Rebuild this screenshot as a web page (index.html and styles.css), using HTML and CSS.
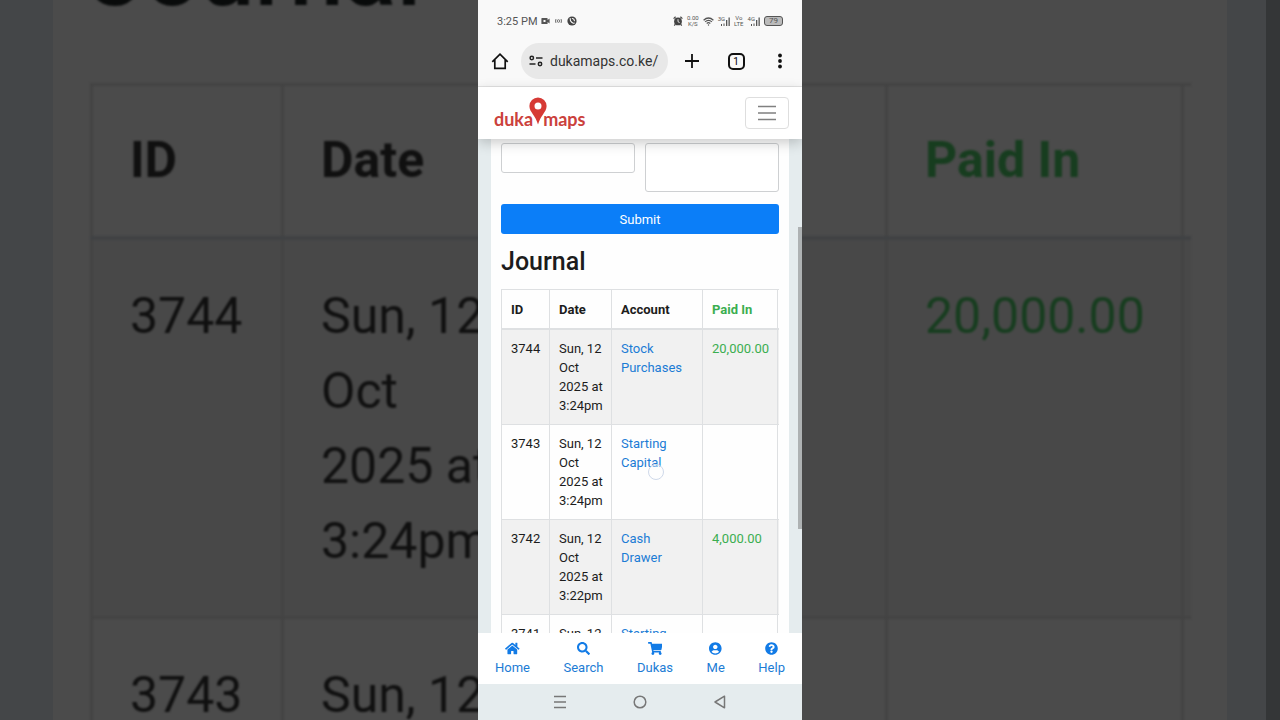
FILE: index.html
```html
<!DOCTYPE html>
<html lang="en">
<head>
  <meta charset="UTF-8">
  <meta name="viewport" content="width=device-width, initial-scale=1">
  <title>Duka Maps</title>
  <link rel="stylesheet" href="styles.css">
</head>
<body>
  <!-- enlarged, dimmed page behind the phone -->
  <div class="backdrop" aria-hidden="true">
    <div class="backdrop-card">
      <div class="backdrop-title">Journal</div>
      <table class="backdrop-table">
        <thead>
          <tr><th class="col-id">ID</th><th class="col-date">Date</th><th class="col-account"></th><th class="col-paid paid">Paid In</th><th class="col-rest"></th></tr>
        </thead>
        <tbody>
          <tr><td>3744</td><td>Sun, 12 Oct<br>2025 at 3:24pm</td><td></td><td class="paid">20,000.00</td><td></td></tr>
          <tr><td>3743</td><td>Sun, 12</td><td></td><td></td><td></td></tr>
        </tbody>
      </table>
    </div>
    <div class="backdrop-scroll"></div>
  </div>

  <div class="phone">
    <div class="status-bar">
      <span class="clock">3:25 PM</span>
      <svg width="9" height="8" viewBox="0 0 9 8"><path fill="#555" fill-rule="evenodd" d="M1 1h5q.6 0 .6.6V3L8.600 1.600v4.800L6.600 5v1.400q0 .6-.6.6H1q-.6 0-.6-.6V1.600Q.4 1 1 1zm1.500 2v2h2V3z"/></svg>
      <svg width="9" height="8" viewBox="0 0 9 8" fill="none" stroke="#555" stroke-width=".8"><circle cx="4.500" cy="4" r="1.300"/><path d="M2 2Q.9 4 2 6M7 2Q8.100 4 7 6"/></svg>
      <svg width="10" height="10" viewBox="0 0 10 10"><circle cx="5" cy="5" r="4.600" fill="#444"/><path d="M3.200 2.600Q3 5 4.700 6.300T7.200 7.100M5.300 2.500Q7.300 2.700 7.400 4.700" fill="none" stroke="#fff" stroke-width="1.100" stroke-linecap="round"/></svg>
      <span class="status-space"></span>
      <svg width="10" height="10" viewBox="0 0 10 10"><circle cx="5" cy="5.400" r="3.900" fill="#444"/><path d="M.6 2.600L2.600.8M9.400 2.600L7.400.8M2.200 8.400l-.9 1.200M7.800 8.400l.9 1.200" stroke="#444" stroke-width="1.200"/><path d="M5 3.200v2.500l1.600.9" fill="none" stroke="#f8f8f8" stroke-width=".9"/></svg>
      <span class="tiny">0.00<br>K/S</span>
      <svg width="11" height="9" viewBox="0 0 11 9" fill="none" stroke="#555" stroke-width="1.200"><path d="M.6 3.200Q5.500-1.200 10.400 3.200M2.100 4.900Q5.500 1.900 8.900 4.900M3.700 6.500Q5.500 4.900 7.300 6.500"/><circle cx="5.500" cy="8" r=".7" fill="#555" stroke="none"/></svg>
      <span class="signal"><span>3G</span><svg width="9" height="10" viewBox="0 0 9 10" fill="#555"><path d="M0 8h1v2H0zM2.500 7.500h1V10h-1zM5 4h1.300v6H5zM7.500 1.500h1.300V10H7.500z"/></svg></span>
      <span class="tiny">Vo<br>LTE</span>
      <span class="signal"><span>4G</span><svg width="9" height="10" viewBox="0 0 9 10" fill="#555"><path d="M0 8h1v2H0zM2.500 7.500h1V10h-1zM5 4h1.300v6H5zM7.500 1.500h1.300V10H7.500z"/></svg></span>
      <span class="battery">79</span>
    </div>

    <div class="browser-bar">
      <button class="bar-btn" aria-label="Home page"><svg width="18" height="18" viewBox="0 0 18 18" fill="none" stroke="#111" stroke-width="1.700"><path d="M1.300 9.800L9 2.200l7.700 7.600M3.800 8v8.400h10.400V8"/></svg></button>
      <label class="address">
        <svg width="14" height="12" viewBox="0 0 14 12" fill="none" stroke="#222" stroke-width="1.500"><circle cx="2.800" cy="3" r="1.700"/><path d="M7 3h6.500M.5 9h6"/><circle cx="11" cy="9" r="1.700"/></svg>
        <input type="text" value="dukamaps.co.ke/" aria-label="Address">
      </label>
      <button class="bar-btn" aria-label="New tab"><svg width="16" height="16" viewBox="0 0 16 16"><path d="M8 1v14M1 8h14" stroke="#111" stroke-width="1.800"/></svg></button>
      <button class="bar-btn" aria-label="Tabs"><span class="tab-count">1</span></button>
      <button class="bar-btn" aria-label="Menu"><svg width="4" height="16" viewBox="0 0 4 16" fill="#111"><circle cx="2" cy="2.500" r="1.900"/><circle cx="2" cy="8" r="1.900"/><circle cx="2" cy="13.500" r="1.900"/></svg></button>
    </div>

    <header class="site-header">
      <a class="logo" href="#"><span>duka</span><svg width="18" height="28" viewBox="0 0 18 28"><path fill="#d63a35" fill-rule="evenodd" d="M9 .5a8.600 8.600 0 0 1 8.600 8.600c0 3.300-1.700 5.700-3.600 8.300C12.200 20 10.300 23 9 27.500 7.700 23 5.800 20 4 17.400 2.100 14.800.4 12.400.4 9.100A8.600 8.600 0 0 1 9 .5zm0 5.100a3.500 3.500 0 1 0 0 7 3.500 3.500 0 0 0 0-7z"/></svg><span>maps</span></a>
      <button class="toggler" aria-label="Toggle navigation"><svg width="20" height="16" viewBox="0 0 20 16"><path d="M1 1.500h18M1 8h18M1 14.500h18" stroke="#808080" stroke-width="1.500"/></svg></button>
    </header>

    <main class="content">
      <div class="card">
        <form class="entry-form">
          <div class="fields">
            <input type="text" class="field" aria-label="Amount">
            <textarea class="field field-tall" aria-label="Notes"></textarea>
          </div>
          <button type="button" class="submit">Submit</button>
        </form>

        <h1>Journal</h1>
        <div class="table-wrap">
          <table class="journal">
            <thead>
              <tr><th class="col-id">ID</th><th class="col-date">Date</th><th class="col-account">Account</th><th class="col-paid paid">Paid In</th><th class="col-rest"></th></tr>
            </thead>
            <tbody>
              <tr><td>3744</td><td>Sun, 12 Oct<br>2025 at 3:24pm</td><td><a href="#">Stock Purchases</a></td><td class="paid">20,000.00</td><td></td></tr>
              <tr><td>3743</td><td>Sun, 12 Oct<br>2025 at 3:24pm</td><td><a href="#">Starting Capital</a></td><td></td><td></td></tr>
              <tr><td>3742</td><td>Sun, 12 Oct<br>2025 at 3:22pm</td><td><a href="#">Cash<br>Drawer</a></td><td class="paid">4,000.00</td><td></td></tr>
              <tr><td>3741</td><td>Sun, 12</td><td><a href="#">Starting</a></td><td></td><td></td></tr>
            </tbody>
          </table>
        </div>
      </div>
    </main>

    <nav class="tabs">
      <a href="#"><svg height="13" viewBox="0 0 576 512"><path d="M280.370 148.260L96 300.110V464a16 16 0 0 0 16 16l112.060-.29a16 16 0 0 0 15.920-16V368a16 16 0 0 1 16-16h64a16 16 0 0 1 16 16v95.640a16 16 0 0 0 16 16.050L464 480a16 16 0 0 0 16-16V300L295.670 148.260a12.190 12.190 0 0 0-15.300 0zM571.600 251.470L488 182.560V44.050a12 12 0 0 0-12-12h-56a12 12 0 0 0-12 12v72.610L318.470 43a48 48 0 0 0-61 0L4.340 251.470a12 12 0 0 0-1.600 16.900l25.500 31A12 12 0 0 0 45.150 301l235.220-193.740a12.190 12.190 0 0 1 15.300 0L530.900 301a12 12 0 0 0 16.900-1.600l25.500-31a12 12 0 0 0-1.700-16.930z"/></svg>Home</a>
      <a href="#"><svg height="13" viewBox="0 0 512 512"><path d="M505 442.700L405.300 343c-4.500-4.500-10.600-7-17-7H372c27.600-35.300 44-79.700 44-128C416 93.100 322.900 0 208 0S0 93.100 0 208s93.100 208 208 208c48.300 0 92.700-16.400 128-44v16.300c0 6.400 2.500 12.500 7 17l99.700 99.700c9.400 9.400 24.600 9.400 33.900 0l28.300-28.300c9.400-9.400 9.400-24.600.1-34zM208 336c-70.700 0-128-57.200-128-128 0-70.700 57.200-128 128-128 70.700 0 128 57.200 128 128 0 70.700-57.200 128-128 128z"/></svg>Search</a>
      <a href="#"><svg height="13" viewBox="0 0 576 512"><path d="M528.120 301.319l47.273-208C578.806 78.301 567.391 64 551.990 64H159.208l-9.166-44.810C147.758 8.021 137.930 0 126.529 0H24C10.745 0 0 10.745 0 24v16c0 13.255 10.745 24 24 24h69.883l70.248 343.435C147.325 417.100 136 435.222 136 456c0 30.928 25.072 56 56 56s56-25.072 56-56c0-15.674-6.447-29.835-16.824-40h209.647C430.447 426.165 424 440.326 424 456c0 30.928 25.072 56 56 56s56-25.072 56-56c0-22.172-12.888-41.332-31.579-50.405l5.517-24.276c3.413-15.018-8.002-29.319-23.403-29.319H218.117l-6.545-32h293.145c11.206 0 20.920-7.754 23.403-18.681z"/></svg>Dukas</a>
      <a href="#"><svg height="13" viewBox="0 0 496 512"><path d="M248 8C111 8 0 119 0 256s111 248 248 248 248-111 248-248S385 8 248 8zm0 96c48.600 0 88 39.400 88 88s-39.400 88-88 88-88-39.400-88-88 39.400-88 88-88zm0 344c-58.700 0-111.300-26.600-146.500-68.200 18.800-35.400 55.600-59.800 98.500-59.800 2.400 0 4.800.4 7.100 1.100 13 4.200 26.600 6.900 40.900 6.900 14.300 0 28-2.700 40.900-6.900 2.300-.7 4.700-1.100 7.100-1.100 42.900 0 79.700 24.400 98.500 59.800C359.300 421.400 306.700 448 248 448z"/></svg>Me</a>
      <a href="#"><svg height="13" viewBox="0 0 512 512"><path d="M504 256c0 136.997-111.043 248-248 248S8 392.997 8 256C8 119.083 119.043 8 256 8s248 111.083 248 248zM262.655 90c-54.497 0-89.255 22.957-116.549 63.758-3.536 5.286-2.353 12.415 2.715 16.258l34.699 26.310c5.205 3.947 12.621 3.008 16.665-2.122 17.864-22.658 30.113-35.797 57.303-35.797 20.429 0 45.698 13.148 45.698 32.958 0 14.976-12.363 22.667-32.534 33.976C247.128 238.528 216 254.941 216 296v4c0 6.627 5.373 12 12 12h56c6.627 0 12-5.373 12-12v-1.333c0-28.462 83.186-29.647 83.186-106.667 0-58.002-60.165-102-116.531-102zM256 338c-25.365 0-46 20.635-46 46 0 25.364 20.635 46 46 46s46-20.636 46-46c0-25.364-20.635-46-46-46z"/></svg>Help</a>
    </nav>

    <div class="system-bar">
      <button aria-label="Recent apps"><svg width="14" height="14" viewBox="0 0 14 14"><path d="M1 1.500h12M1 7h12M1 12.500h12" stroke="#777" stroke-width="1.500"/></svg></button>
      <button aria-label="Home"><svg width="14" height="14" viewBox="0 0 14 14"><circle cx="7" cy="7" r="5.800" fill="none" stroke="#777" stroke-width="1.500"/></svg></button>
      <button aria-label="Back"><svg width="14" height="14" viewBox="0 0 14 14"><path d="M11.500 1.200v11.600L2 7z" fill="none" stroke="#777" stroke-width="1.500" stroke-linejoin="round"/></svg></button>
    </div>

    <span class="scroll-thumb"></span>
    <span class="touch"></span>
  </div>
</body>
</html>
```

FILE: styles.css
```css
* { box-sizing: border-box; }
body {
  margin: 0;
  height: 100vh;
  overflow: hidden;
  position: relative;
  background: #444648;
  font-family: Roboto, "Liberation Sans", sans-serif;
  font-size: 13px;
  line-height: 19px;
  color: #1c1c1c;
}
button {
  font: inherit;
  border: 0;
  padding: 0;
  background: none;
  cursor: pointer;
}
a { color: #1c7cd5; text-decoration: none; }
svg { display: block; flex: none; }
table { border-collapse: collapse; table-layout: fixed; width: 100%; }
th { text-align: left; }
td { vertical-align: top; }

/* backdrop */
.backdrop {
  position: absolute;
  inset: 0;
  overflow: hidden;
  color: #101010;
}
.backdrop-card {
  margin: -88px 53px 0;
  padding: 0 36px 0 37px;
  min-height: 150vh;
  background: #4b4b4b;
}
.backdrop-title {
  font-size: 98px;
  line-height: 120px;
  font-weight: 500;
  margin-bottom: 51px;
  color: #090b0b;
  filter: blur(1px);
}
.backdrop-table {
  font-size: 50px;
  line-height: 75px;
  filter: blur(1px);
}
.backdrop-table th, .backdrop-table td {
  border: 3px solid #434343;
  border-right: 0;
  padding: 39px 30px 37px 37px;
}
.backdrop-table thead th {
  padding: 37px 0 38px 37px;
  border-bottom: 4px solid #404244;
}
.backdrop-table tbody tr:nth-child(odd) { background: #484848; }
.backdrop-table .col-id { width: 191px; }
.backdrop-table .col-date { width: 247px; }
.backdrop-table .col-account { width: 357px; }
.backdrop-table .col-paid { width: 296px; }
.backdrop-table .paid { color: #173d1f; }
.backdrop-table td:nth-child(1), .backdrop-table td.paid { padding-right: 0; }
.backdrop-table th:last-child, .backdrop-table td:last-child { padding: 0; }
.backdrop-scroll {
  position: absolute;
  top: 0;
  right: 0;
  bottom: 0;
  width: 14px;
  background: #343637;
}

/* phone */
.phone {
  position: relative;
  height: 100vh;
  aspect-ratio: 9 / 20;
  margin: 0 auto;
  display: flex;
  flex-direction: column;
  overflow: hidden;
  background: #e5ecee;
}
.status-bar {
  flex: none;
  height: 42px;
  padding: 0 19px;
  display: flex;
  align-items: center;
  gap: 4px;
  background: #f9f9f9;
  color: #555;
}
.clock { font-size: 11px; }
.status-space { flex: 1; }
.tiny {
  font-size: 6px;
  line-height: 6px;
  text-align: center;
}
.signal { display: flex; align-items: flex-end; }
.signal span {
  font-size: 6px;
  line-height: 6px;
  align-self: flex-start;
  margin-right: -4px;
}
.battery {
  width: 19px;
  height: 10px;
  border: 1px solid #555;
  border-radius: 3px;
  background: #bbb;
  font-size: 8px;
  line-height: 8px;
  text-align: center;
}
.browser-bar {
  flex: none;
  height: 45px;
  padding: 1px 0 7px;
  display: flex;
  align-items: center;
  background: #f9f9f9;
  border-bottom: 1px solid #e3e3e3;
}
.bar-btn {
  width: 44px;
  display: flex;
  justify-content: center;
}
.address {
  flex: 1;
  min-width: 0;
  height: 36px;
  margin: 0 2px 0 -1px;
  padding: 0 6px 0 8px;
  display: flex;
  align-items: center;
  gap: 7px;
  border-radius: 18px;
  background: #e8e8e8;
}
.address input {
  flex: 1;
  min-width: 0;
  border: 0;
  padding: 0;
  background: none;
  font-family: inherit;
  font-size: 14px;
  color: #333;
}
.tab-count {
  width: 17px;
  height: 17px;
  border: 2px solid #111;
  border-radius: 5px;
  font-size: 10px;
  line-height: 13px;
}

.site-header {
  flex: none;
  position: relative;
  z-index: 1;
  height: 52px;
  padding: 0 13px 0 16px;
  display: flex;
  align-items: center;
  justify-content: space-between;
  background: #fff;
  box-shadow: 0 4px 12px rgba(0, 0, 0, 0.2);
}
.logo {
  display: flex;
  align-items: center;
  font-family: Lato, sans-serif;
  font-size: 18px;
  font-weight: 700;
  color: #cb413c;
}
.logo span { padding-top: 12px; }
.logo svg { margin: 0 -4px 4px; }
.toggler {
  width: 44px;
  height: 32px;
  display: flex;
  align-items: center;
  justify-content: center;
  border: 1px solid #dedede;
  border-radius: 4px;
}

.content {
  flex: 1;
  min-height: 0;
  overflow: hidden;
}
.card {
  margin: 0 13px;
  padding: 4px 10px 0;
  background: #fefefe;
}
.fields {
  display: flex;
  align-items: flex-start;
  gap: 10px;
  margin-bottom: 12px;
}
.field {
  flex: 1;
  min-width: 0;
  height: 30px;
  border: 1px solid #ced0d2;
  border-radius: 3px;
  background: #fff;
  resize: none;
}
.field-tall { height: 49px; }
.submit {
  display: block;
  width: 100%;
  height: 30px;
  border-radius: 3px;
  background: #0b7ef8;
  color: #fff;
}
h1 {
  margin: 12px 0;
  font-size: 25px;
  line-height: 31px;
  font-weight: 500;
}
.table-wrap { overflow: hidden; }
.journal th, .journal td {
  border: 1px solid #dee0e2;
  border-right: 0;
  padding: 9px 0 9px 9px;
}
.journal thead th {
  padding-top: 10px;
  border-bottom-width: 2px;
}
.journal tbody tr:nth-child(odd) { background: #f1f1f1; }
.journal .col-id { width: 48px; }
.journal .col-date { width: 62px; }
.journal .col-account { width: 91px; }
.journal .col-paid { width: 75px; }
.journal .paid { color: #3bae50; }
.journal th:last-child, .journal td:last-child { padding: 0; }

.tabs {
  flex: none;
  height: 51px;
  padding: 9px 17px 0;
  display: flex;
  justify-content: space-between;
  background: #fff;
}
.tabs a {
  display: flex;
  flex-direction: column;
  align-items: center;
  gap: 3px;
}
.tabs svg { fill: #127be6; }
.system-bar {
  flex: none;
  height: 36px;
  display: flex;
  justify-content: center;
  background: #e5ecee;
}
.system-bar button {
  width: 80px;
  display: flex;
  align-items: center;
  justify-content: center;
}

/* overlays */
.scroll-thumb {
  position: absolute;
  top: 227px;
  right: 0;
  width: 4px;
  height: 302px;
  background: #aeb2b3;
}
.touch {
  position: absolute;
  left: 170px;
  top: 464px;
  width: 16px;
  height: 16px;
  border: 1px solid #cfd9ea;
  border-radius: 50%;
  background: rgba(255, 255, 255, 0.4);
}
```
